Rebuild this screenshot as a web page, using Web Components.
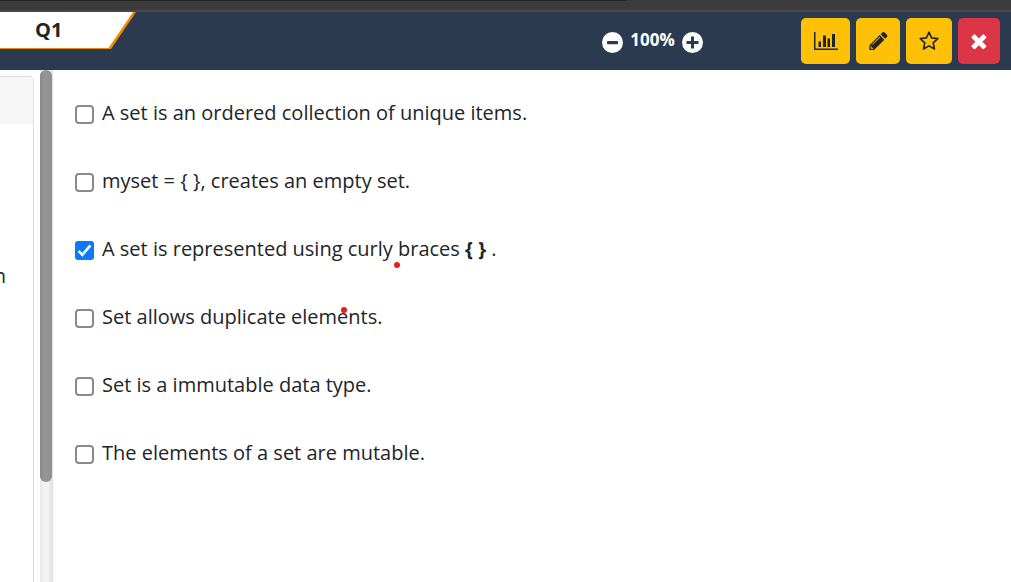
<!DOCTYPE html>
<html lang="en">
<head>
<meta charset="utf-8">
<title>Q1</title>
<style>
html, body { height: 100%; margin: 0; }
body { background: #fff; color: #212529; font: 20px/32px "Open Sans", "Noto Sans", sans-serif; overflow: hidden; }
</style>
</head>
<body>
<quiz-app></quiz-app>
<script>
const define = (name, html, setup) => {
  const template = document.createElement('template');
  template.innerHTML = html;
  customElements.define(name, class extends HTMLElement {
    constructor() {
      super();
      this.attachShadow({ mode: 'open' }).append(template.content.cloneNode(true));
    }
    connectedCallback() { if (setup) setup(this, this.shadowRoot); }
  });
};

define('window-strip', `
<style>
:host { display: block; height: 12px; box-sizing: border-box; background: #3b3b3b; border-bottom: 2px solid #474747; }
div { height: 1px; width: 62%; background: #252525; border-radius: 0 0 4px 0; }
</style><div></div>`);

define('question-tab', `
<style>
:host { display: grid; width: 136px; height: 37px; }
svg, span { grid-area: 1 / 1; }
svg { display: block; }
span { padding-left: 35px; font-size: 20px; line-height: 36px; font-weight: 700; }
</style>
<svg width="136" height="37" viewBox="0 0 136 37" aria-hidden="true">
<path d="M0 0H136L111 37H0Z" fill="#f08c00"/><path d="M0 0H133L108.500 36H0Z" fill="#fff"/>
</svg><span><slot></slot></span>`);

define('zoom-control', `
<style>
:host { display: flex; align-items: center; gap: 7px; color: #fff; font-size: 17px; line-height: 24px; font-weight: 700; }
button { border: 0; padding: 0; background: none; display: block; width: 21px; height: 21px; margin-top: 4px; }
svg { display: block; }
</style>
<button type="button" aria-label="Zoom out"><svg width="21" height="21" viewBox="0 0 21 21"><circle cx="10.500" cy="10.500" r="10.500" fill="#fff"/><rect x="5" y="9" width="11" height="3.200" rx=".8" fill="#2c3a50"/></svg></button>
<span><slot></slot></span>
<button type="button" aria-label="Zoom in"><svg width="21" height="21" viewBox="0 0 21 21"><circle cx="10.500" cy="10.500" r="10.500" fill="#fff"/><path d="M9 4.500h3V9h4.500v3H12v4.500H9V12H4.500V9H9z" fill="#2c3a50"/></svg></button>`);

define('tool-button', `
<style>
:host { display: block; color: #212529; }
button { display: flex; align-items: center; justify-content: center; height: 46px; box-sizing: border-box; padding: 0 12px; border: 0; border-radius: 5px; background: #ffc107; color: inherit; }
:host([danger]) { color: #fff; }
:host([danger]) button { background: #dc3545; }
</style><button type="button"><slot></slot></button>`,
(host, root) => root.querySelector('button').setAttribute('aria-label', host.getAttribute('label')));

define('quiz-header', `
<style>
:host { display: grid; grid-template-columns: 1fr auto 1fr; height: 58px; background: #2c3a50; }
zoom-control { height: 56px; margin-left: 294px; }
nav { display: flex; gap: 6px; justify-content: flex-end; padding: 6px 11px 0 0; }
svg { display: block; }
</style>
<question-tab>Q1</question-tab>
<zoom-control>100%</zoom-control>
<nav>
<tool-button label="Statistics"><svg width="25" height="20" viewBox="0 0 25 20" fill="currentColor"><path d="M1 1h1.500v16.500H25V19H1zM5.500 10.500H8V16H5.500zM10 4.500h3V16h-3zM14.500 7.500H17V16h-2.500zM19 3h3v13h-3z"/></svg></tool-button>
<tool-button label="Edit"><svg width="20" height="20" viewBox="0 0 20 20" fill="currentColor"><path d="M14.300 1.500q1.200-1.200 2.400 0l2.200 2.200q1.100 1.200 0 2.400l-1.700 1.700-4.600-4.600zM11.700 4.100l4.600 4.600L6 19H1.300v-4.600z"/><path d="M4.500 13.400l7.400-7.400M3 15.200v2.100h2.200" fill="none" stroke="#ffc107" stroke-width="1"/></svg></tool-button>
<tool-button label="Bookmark"><svg width="22" height="22" viewBox="0 0 22 22" fill="none" stroke="currentColor" stroke-width="1.600" stroke-linejoin="round"><path d="M11 2.200l2.600 5.700 6.200.7-4.600 4.200 1.300 6.200L11 15.900 5.500 19l1.300-6.200-4.600-4.200 6.200-.7z"/></svg></tool-button>
<tool-button danger label="Close"><svg width="18" height="18" viewBox="0 0 18 18" fill="currentColor"><path d="M5.100 2.600L8.900 6.400l3.800-3.800q.6-.6 1.200 0l2.200 2.200q.6.600 0 1.200L12.300 9.800l3.800 3.800q.6.600 0 1.200L13.900 17q-.6.600-1.200 0l-3.800-3.800L5.100 17q-.6.600-1.200 0l-2.200-2.200q-.6-.6 0-1.200l3.800-3.800L1.700 6q-.6-.6 0-1.200l2.200-2.200q.6-.6 1.200 0z"/></svg></tool-button>
</nav>`);

define('question-panel', `
<style>
:host { display: block; width: 34px; padding: 6px 6px 0 0; overflow: hidden; }
section { height: 100%; box-sizing: border-box; border: 1px solid #dcdee1; border-width: 1px 1px 0 0; border-radius: 0 5px 0 0; }
header { height: 47px; background: #f7f7f7; border-radius: 0 4px 0 0; }
p { display: flex; justify-content: flex-end; width: 6px; margin: 136px 0 0; overflow: hidden; }
</style><section><header></header><p><slot></slot></p></section>`);

define('panel-scrollbar', `
<style>
:host { display: block; width: 12px; background: linear-gradient(90deg, #e6e7e9, #f3f3f3 40%, #f1f1f1 70%, #dfe2e7); border-right: 1px solid #dfe3e8; }
div { height: 412px; max-height: 100%; border-radius: 6px; background: linear-gradient(90deg, #888, #959595 40%, #909090); }
</style><div></div>`);

define('answer-option', `
<style>
:host { display: block; position: relative; }
label { display: flex; align-items: center; gap: 8px; height: 68px; }
.box { display: grid; width: 19px; height: 19px; margin-top: 2px; }
.box > * { grid-area: 1 / 1; }
input { appearance: none; box-sizing: border-box; width: 19px; height: 19px; margin: 0; border: 2px solid #8a8a8a; border-radius: 4px; background: #fff; }
input:checked { border: 0; border-radius: 3px; background: #0a79ff; }
svg { display: none; pointer-events: none; }
input:checked + svg { display: block; }
.text { white-space: pre; }
</style><label><span class="box"><input type="checkbox"><svg width="19" height="19" viewBox="0 0 19 19" fill="none" stroke="#fff" stroke-width="2.600" aria-hidden="true"><path d="M3.600 10l3.800 3.800L15.400 4.400"/></svg></span><span class="text"><slot></slot></span></label><slot name="mark"></slot>`,
(host, root) => { root.querySelector('input').checked = host.hasAttribute('checked'); });

define('red-mark', `
<style>
:host { position: absolute; width: 6px; height: 6px; border-radius: 50%; background: #ea1b22; }
</style>`);

define('quiz-app', `
<style>
:host { display: flex; flex-direction: column; height: 100vh; }
.body { display: flex; flex: 1; min-height: 0; }
main { flex: 1; min-width: 0; padding: 9px 22px; }
.curly { left: 319px; top: 47px; }
.elements { left: 266px; top: 24px; }
</style>
<window-strip></window-strip>
<quiz-header></quiz-header>
<div class="body">
<question-panel>n</question-panel>
<panel-scrollbar></panel-scrollbar>
<main>
<answer-option>A set is an ordered collection of unique items.</answer-option>
<answer-option>myset = { }, creates an empty set.</answer-option>
<answer-option checked>A set is represented using curly braces <b>{ }</b> .<red-mark slot="mark" class="curly"></red-mark></answer-option>
<answer-option>Set allows duplicate elements.<red-mark slot="mark" class="elements"></red-mark></answer-option>
<answer-option>Set is a immutable data type.</answer-option>
<answer-option>The elements of a set are mutable.</answer-option>
</main>
</div>`);
</script>
</body>
</html>
